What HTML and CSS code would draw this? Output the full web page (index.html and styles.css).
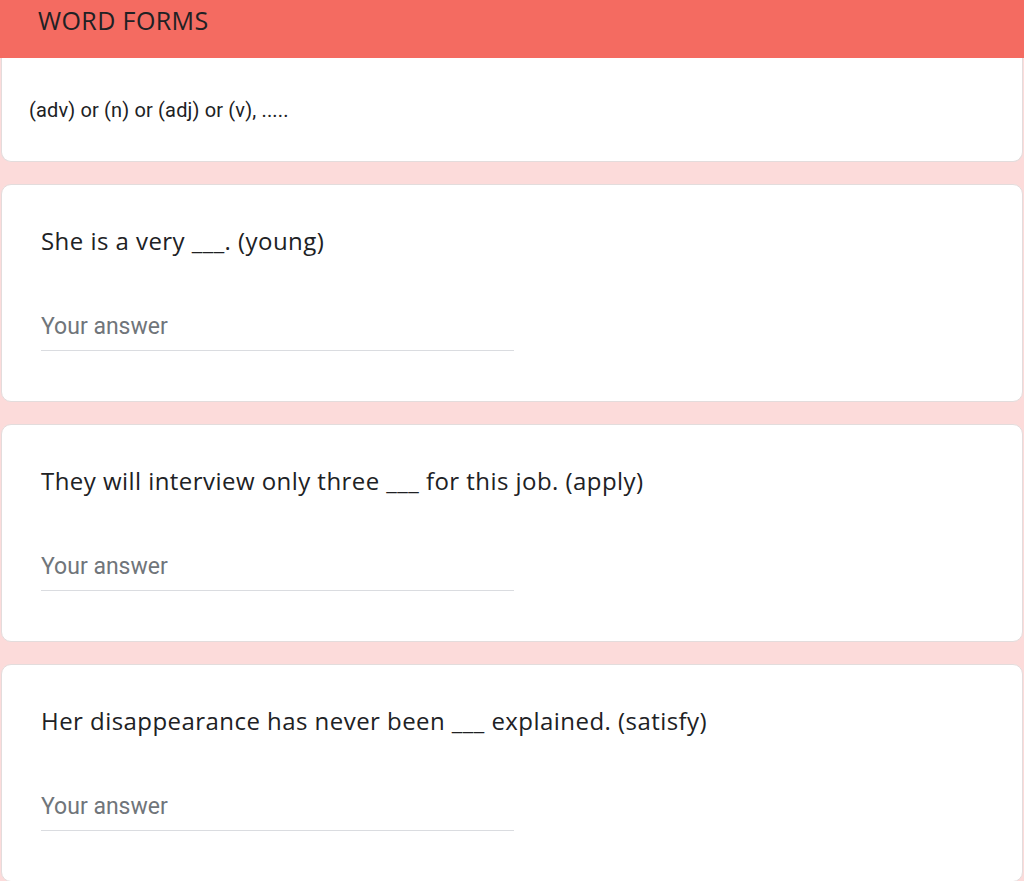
FILE: index.html
```html
<!DOCTYPE html>
<html>
<head>
<meta charset="utf-8">
<link rel="stylesheet" href="styles.css">
</head>
<body>
<div class="page">
  <div class="title-card">
    <div class="title-bar"><h1 class="title">WORD FORMS</h1></div>
    <div class="title-body"><p class="desc">(adv) or (n) or (adj) or (v), .....</p></div>
  </div>
  <div class="card">
    <div class="question">She is a very ___. (young)</div>
    <div class="answer"><span class="placeholder">Your answer</span></div>
  </div>
  <div class="card">
    <div class="question">They will interview only three ___ for this job. (apply)</div>
    <div class="answer"><span class="placeholder">Your answer</span></div>
  </div>
  <div class="card">
    <div class="question">Her disappearance has never been ___ explained. (satisfy)</div>
    <div class="answer"><span class="placeholder">Your answer</span></div>
  </div>
</div>
</body>
</html>
```
FILE: styles.css
```css
html, body {
  margin: 0;
  padding: 0;
  background: #fcdbda;
  height: 881px;
  overflow: hidden;
}
.page {
  display: flex;
  flex-direction: column;
  gap: 22px;
}
.title-card {
  display: flex;
  flex-direction: column;
}
.title-bar {
  height: 58px;
  background: #f46b61;
  box-sizing: border-box;
  padding-left: 38px;
  display: flex;
  align-items: flex-start;
}
.title {
  margin: 0;
  padding-top: 5px;
  font-family: "Open Sans", sans-serif;
  font-weight: 400;
  font-size: 25px;
  letter-spacing: 0.4px;
  line-height: 30px;
  color: #202124;
}
.title-body {
  margin: 0 1px 0 1px;
  height: 104px;
  box-sizing: border-box;
  background: #fff;
  border: 1px solid #e3dcdc;
  border-top: none;
  border-radius: 0 0 10px 10px;
  padding-left: 27px;
  display: flex;
  align-items: center;
}
.desc {
  margin: 0;
  font-family: Roboto, sans-serif;
  font-size: 20px;
  letter-spacing: 0.15px;
  color: #202124;
}
.card {
  margin: 0 1px 0 1px;
  height: 218px;
  box-sizing: border-box;
  background: #fff;
  border: 1px solid #e3dcdc;
  border-radius: 10px;
  padding: 40px 0 0 39px;
  display: flex;
  flex-direction: column;
}
.question {
  font-family: "Open Sans", sans-serif;
  font-size: 24px;
  letter-spacing: 0.45px;
  line-height: 32px;
  color: #202124;
}
.answer {
  margin-top: 57px;
  width: 473px;
  padding-bottom: 8px;
  border-bottom: 1px solid #dadce0;
  line-height: 26px;
}
.placeholder {
  font-family: Roboto, sans-serif;
  font-size: 23px;
  line-height: 26px;
  color: #70757a;
}
```
